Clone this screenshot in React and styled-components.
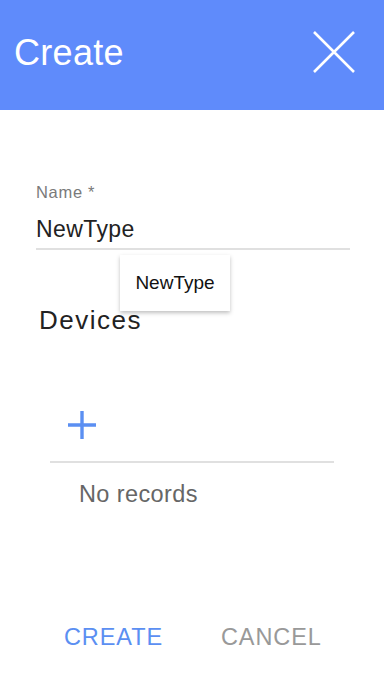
import React from 'react';
import styled, { createGlobalStyle } from 'styled-components';

const GlobalStyle = createGlobalStyle`
  html, body {
    margin: 0;
    padding: 0;
    background: #fff;
    font-family: "Liberation Sans", Arial, sans-serif;
  }
`;

export default function App() {
  return (
    <>
      <GlobalStyle />
      <Page>
        <Header>
          <Title>Create</Title>
          <CloseButton aria-label="close">
            <svg width="42" height="42" viewBox="0 0 42 42">
              <path d="M1 1 L41 41 M41 1 L1 41" stroke="#fff" strokeWidth="2.6" fill="none" />
            </svg>
          </CloseButton>
        </Header>

        <Body>
          <Field>
            <Label>Name *</Label>
            <Input>NewType</Input>
            <Suggest>
              <SuggestItem>NewType</SuggestItem>
            </Suggest>
          </Field>

          <Section>Devices</Section>

          <Table>
            <AddRow>
              <AddButton aria-label="add">
                <svg width="30" height="28" viewBox="0 0 30 28">
                  <path d="M15 0 V28 M1 14 H29" stroke="#5b8ff2" strokeWidth="3.4" fill="none" />
                </svg>
              </AddButton>
            </AddRow>
            <Empty>No records</Empty>
          </Table>
        </Body>

        <Actions>
          <ActionButton $primary>CREATE</ActionButton>
          <ActionButton>CANCEL</ActionButton>
        </Actions>
      </Page>
    </>
  );
}

const Page = styled.div`
  width: 384px;
  height: 692px;
  display: flex;
  flex-direction: column;
  background: #fff;
`;

const Header = styled.div`
  height: 110px;
  background: #5f8bfb;
  display: flex;
  align-items: center;
  justify-content: space-between;
  padding: 0 29px 0 14px;
  box-sizing: border-box;
`;

const Title = styled.h1`
  margin: 0;
  color: #fff;
  font-weight: 400;
  font-size: 36px;
  letter-spacing: 0.3px;
  padding-bottom: 4px;
`;

const CloseButton = styled.button`
  border: none;
  background: none;
  padding: 0;
  display: flex;
  margin-bottom: 6px;
`;

const Body = styled.div`
  flex: 1;
  display: flex;
  flex-direction: column;
`;

const Field = styled.div`
  position: relative;
  margin: 73px 34px 0 36px;
  border-bottom: 2px solid #e0e0e0;
  padding-bottom: 5px;
`;

const Label = styled.div`
  color: #7a7a7a;
  font-size: 16.5px;
  letter-spacing: 0.7px;
  line-height: 18px;
`;

const Input = styled.div`
  color: #222;
  font-size: 23px;
  letter-spacing: 0.4px;
  line-height: 28px;
  margin-top: 14px;
`;

const Suggest = styled.div`
  position: absolute;
  left: 84px;
  top: 72px;
  width: 110px;
  height: 56px;
  background: #fff;
  box-shadow: 0 2px 4px rgba(0, 0, 0, 0.25);
  display: flex;
  align-items: center;
  justify-content: center;
  z-index: 2;
`;

const SuggestItem = styled.span`
  font-size: 19px;
  color: #111;
`;

const Section = styled.h2`
  margin: 55px 0 0 39px;
  font-weight: 400;
  font-size: 26px;
  letter-spacing: 1.5px;
  color: #222;
  line-height: 30px;
`;

const Table = styled.div`
  margin: 66px 50px 0 50px;
`;

const AddRow = styled.div`
  border-bottom: 2px solid #e0e0e0;
  padding: 10px 0 22px 17px;
`;

const AddButton = styled.button`
  border: none;
  background: none;
  padding: 0;
  display: flex;
`;

const Empty = styled.div`
  margin: 18px 0 0 29px;
  font-size: 23.5px;
  letter-spacing: 0.4px;
  color: #666;
`;

const Actions = styled.div`
  display: flex;
  gap: 58px;
  padding: 0 0 41px 64px;
`;

const ActionButton = styled.button`
  border: none;
  background: none;
  padding: 0;
  font-family: inherit;
  font-size: 23.5px;
  letter-spacing: 0.9px;
  color: ${(p) => (p.$primary ? '#5b8ff2' : '#999')};
`;
